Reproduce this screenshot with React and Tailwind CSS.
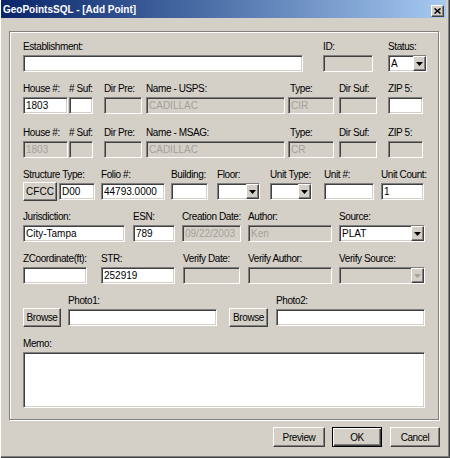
import React from 'react';

const sunken = 'border border-t-[#808080] border-l-[#808080] border-b-white border-r-white shadow-[inset_1px_1px_0_#404040,inset_-1px_-1px_0_#d4d0c8]';
const raised = 'border border-t-white border-l-white border-r-[#404040] border-b-[#404040] shadow-[inset_-1px_-1px_0_#808080]';

const Field = ({ cls, label, children }) => (
    <div className={`flex flex-col shrink-0 ${cls}`}>
        <div className="h-[12px] leading-[12px] mb-[2px] whitespace-nowrap">{label}</div>
        {children}
    </div>
);

const Edit = ({ value, disabled, cls = 'w-full' }) => (
    <div className={`${cls} h-[17px] ${sunken} ${disabled ? 'bg-[#d4d0c8] text-[#a3a19b]' : 'bg-white text-black'} pl-[2px] leading-[15px] tracking-normal whitespace-nowrap overflow-hidden`}>
        {value}
    </div>
);

const Select = ({ value, disabled }) => (
    <div className={`w-full h-[17px] flex ${sunken} ${disabled ? 'bg-[#d4d0c8]' : 'bg-white'}`}>
        <span className="flex-1 pl-[2px] leading-[15px] tracking-normal whitespace-nowrap overflow-hidden">{value}</span>
        <div className={`w-[13px] h-[15px] bg-[#d4d0c8] flex items-center justify-center ${raised}`}>
            <svg width="7" height="4" viewBox="0 0 7 4">
                <polygon points="0,0 7,0 3.5,4" fill={disabled ? '#a3a19b' : '#000'} />
            </svg>
        </div>
    </div>
);

const Button = ({ cls, children, isDefault }) => (
    <div
        className={`shrink-0 flex items-center justify-center bg-[#d4d0c8] ${cls} ${
            isDefault
                ? 'border border-black shadow-[inset_1px_1px_0_#fff,inset_-1px_-1px_0_#404040,inset_-2px_-2px_0_#808080]'
                : raised
        }`}
    >
        {children}
    </div>
);

const AddressRow = ({ cls, nameLabel, house, name, type, allDisabled }) => (
    <div className={`flex ${cls}`}>
        <Field cls="w-[45px]" label="House #:"><Edit value={house} disabled={allDisabled} /></Field>
        <Field cls="ml-[1px] w-[24px]" label="# Suf:"><Edit disabled={allDisabled} /></Field>
        <Field cls="ml-[11px] w-[38px]" label="Dir Pre:"><Edit disabled /></Field>
        <Field cls="ml-[4px] w-[139px]" label={nameLabel}><Edit value={name} disabled /></Field>
        <Field cls="ml-[3px] w-[46px]" label={<span className="pl-[2px]">Type:</span>}><Edit value={type} disabled /></Field>
        <Field cls="ml-[5px] w-[38px]" label="Dir Suf:"><Edit disabled /></Field>
        <Field cls="ml-[11px] w-[35px]" label="ZIP 5:"><Edit disabled={allDisabled} /></Field>
    </div>
);

export default function App() {
    return (
        <div className="w-[450px] h-[458px] bg-[#d4d0c8] text-black text-[10px] tracking-[-0.4px] font-['Liberation_Sans',Arial,sans-serif] shadow-[inset_1px_0_0_#fff,inset_-1px_-1px_0_#404040,inset_-2px_-2px_0_#808080] flex flex-col overflow-hidden">
            {/* Title bar */}
            <div className="ml-[1px] w-[445px] h-[18px] bg-gradient-to-r from-[#0a246a] to-[#a6caf0] flex items-start justify-between pl-[2px] pr-[2px]">
                <span className="pt-[2px] leading-[16px] font-bold tracking-normal text-white whitespace-nowrap">GeoPointsSQL - [Add Point]</span>
                <div className={`mt-[5px] w-[13px] h-[12px] bg-[#d4d0c8] flex items-center justify-center ${raised}`}>
                    <svg width="7" height="6" viewBox="0 0 7 6">
                        <path d="M0.5 0.5 L6.5 5.5 M6.5 0.5 L0.5 5.5" stroke="#000" strokeWidth="1.6" />
                    </svg>
                </div>
            </div>

            {/* Group box */}
            <div className="ml-[9px] mt-[13px] w-[430px] h-[389px] border border-[#808080] shadow-[1px_1px_0_#fff,inset_1px_1px_0_#fff] pl-[13px] pt-[9px]">
                <div className="flex">
                    <Field cls="w-[280px]" label="Establishment:"><Edit /></Field>
                    <Field cls="ml-[20px] w-[50px]" label="ID:"><Edit disabled /></Field>
                    <Field cls="ml-[15px] w-[39px]" label="Status:"><Select value="A" /></Field>
                </div>

                <AddressRow cls="mt-[11px]" nameLabel="Name - USPS:" house="1803" name="CADILLAC" type="CIR" />
                <AddressRow cls="mt-[13px]" nameLabel="Name - MSAG:" house="1803" name="CADILLAC" type="CR" allDisabled />

                <div className="flex mt-[11px]">
                    <div className="flex flex-col w-[72px] shrink-0">
                        <div className="h-[12px] leading-[12px] mb-[1px] whitespace-nowrap">Structure Type:</div>
                        <div className="flex items-center">
                            <Button cls="w-[34px] h-[19px] tracking-normal">CFCC</Button>
                            <Edit cls="ml-[2px] w-[36px]" value="D00" />
                        </div>
                    </div>
                    <Field cls="ml-[6px] w-[64px]" label="Folio #:"><Edit value="44793.0000" /></Field>
                    <Field cls="ml-[6px] w-[37px]" label="Building:"><Edit /></Field>
                    <Field cls="ml-[9px] w-[43px]" label="Floor:"><Select /></Field>
                    <Field cls="ml-[10px] w-[42px]" label="Unit Type:"><Select /></Field>
                    <Field cls="ml-[12px] w-[50px]" label="Unit #:"><Edit /></Field>
                    <Field cls="ml-[7px] w-[43px]" label="Unit Count:"><Edit value="1" /></Field>
                </div>

                <div className="flex mt-[10px]">
                    <Field cls="w-[102px]" label="Jurisdiction:"><Edit value="City-Tampa" /></Field>
                    <Field cls="ml-[8px] w-[42px]" label="ESN:"><Edit value="789" /></Field>
                    <Field cls="ml-[7px] w-[59px]" label="Creation Date:"><Edit value="09/22/2003" disabled /></Field>
                    <Field cls="ml-[7px] w-[84px]" label="Author:"><Edit value="Ken" disabled /></Field>
                    <Field cls="ml-[7px] w-[86px]" label="Source:"><Select value="PLAT" /></Field>
                </div>

                <div className="flex mt-[11px]">
                    <Field cls="w-[64px]" label="ZCoordinate(ft):"><Edit /></Field>
                    <Field cls="ml-[14px] w-[74px]" label="STR:"><Edit value="252919" /></Field>
                    <Field cls="ml-[8px] w-[57px]" label="Verify Date:"><Edit disabled /></Field>
                    <Field cls="ml-[8px] w-[84px]" label="Verify Author:"><Edit disabled /></Field>
                    <Field cls="ml-[7px] w-[86px]" label="Verify Source:"><Select disabled /></Field>
                </div>

                <div className="flex mt-[11px]">
                    <Button cls="mt-[13px] w-[38px] h-[19px]">Browse</Button>
                    <Field cls="ml-[7px] w-[149px]" label="Photo1:"><Edit /></Field>
                    <Button cls="ml-[12px] mt-[13px] w-[39px] h-[19px]">Browse</Button>
                    <Field cls="ml-[8px] w-[149px]" label="Photo2:"><Edit /></Field>
                </div>

                <div className="flex flex-col mt-[11px] w-[402px]">
                    <div className="h-[12px] leading-[12px] mb-[2px]">Memo:</div>
                    <div className={`h-[56px] bg-white ${sunken}`}></div>
                </div>
            </div>

            {/* Dialog buttons */}
            <div className="flex mt-[7px] pl-[273px]">
                <Button cls="w-[52px] h-[20px]">Preview</Button>
                <Button cls="ml-[7px] w-[50px] h-[20px]" isDefault>OK</Button>
                <Button cls="ml-[8px] w-[50px] h-[20px]">Cancel</Button>
            </div>
        </div>
    );
}
